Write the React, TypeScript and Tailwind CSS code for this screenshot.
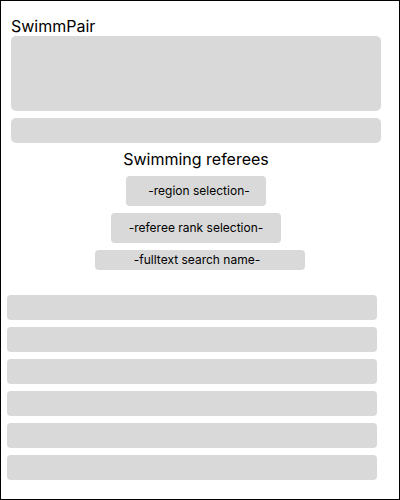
export default function App() {
  const rows = [0, 1, 2, 3, 4, 5];

  return (
    <div
      className="flex h-[500px] w-[400px] flex-col border border-black bg-white text-black"
      style={{ fontFamily: 'Inter, "Liberation Sans", sans-serif' }}
    >
      <header className="flex flex-col px-[10px] pt-[16px]">
        <h1 className="text-[16px] leading-[19px] font-normal">SwimmPair</h1>
        <div className="h-[75px] w-[370px] rounded-[5px] bg-[#d9d9d9]" />
        <div className="mt-[7px] h-[25px] w-[370px] rounded-[5px] bg-[#d9d9d9]" />
      </header>

      <section className="flex flex-col items-center pr-[8px] pt-[7px]">
        <h2 className="text-[16px] leading-[19px] font-normal">Swimming referees</h2>
        <div className="mt-[7px] flex h-[30px] w-[140px] items-center justify-center rounded-[4px] bg-[#d9d9d9] pl-[6px] text-[12px]">
          -region selection-
        </div>
        <div className="mt-[7px] flex h-[30px] w-[170px] items-center justify-center rounded-[4px] bg-[#d9d9d9] text-[12px]">
          -referee rank selection-
        </div>
        <div className="ml-[8px] mt-[7px] flex h-[20px] w-[210px] items-center justify-center rounded-[4px] bg-[#d9d9d9] pr-[6px] text-[12px]">
          -fulltext search name-
        </div>
      </section>

      <ul className="flex flex-col gap-[7px] px-[6px] pt-[25px]">
        {rows.map((r) => (
          <li key={r} className="h-[25px] w-[370px] rounded-[4px] bg-[#d9d9d9]" />
        ))}
      </ul>
    </div>
  );
}
